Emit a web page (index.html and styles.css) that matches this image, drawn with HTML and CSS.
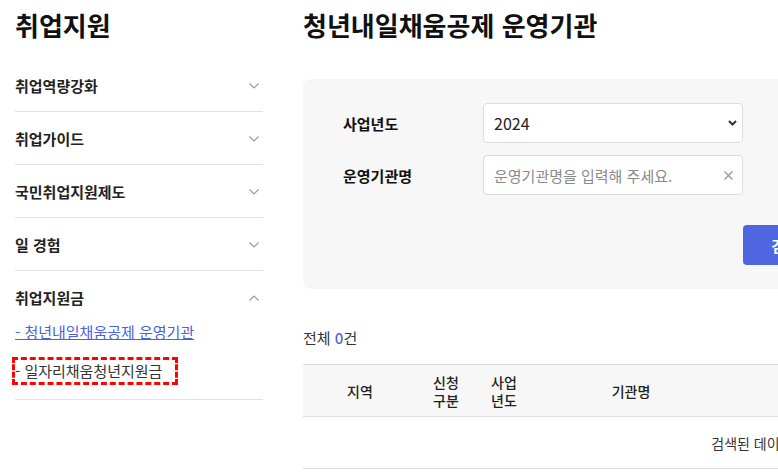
FILE: index.html
```html
<!DOCTYPE html>
<html lang="ko">
<head>
<meta charset="utf-8">
<title>청년내일채움공제 운영기관</title>
<link rel="stylesheet" href="styles.css">
</head>
<body>
<div class="page">
  <aside class="sidebar">
    <h2 class="side-title">취업지원</h2>
    <ul class="menu">
      <li class="menu-item">
        <div class="menu-head"><span>취업역량강화</span>
          <svg class="chev" width="10" height="6" viewBox="0 0 10 6"><path d="M0.5 0.5 L5 5 L9.5 0.5" fill="none" stroke="#9a9a9a" stroke-width="1.2"/></svg>
        </div>
      </li>
      <li class="menu-item">
        <div class="menu-head"><span>취업가이드</span>
          <svg class="chev" width="10" height="6" viewBox="0 0 10 6"><path d="M0.5 0.5 L5 5 L9.5 0.5" fill="none" stroke="#9a9a9a" stroke-width="1.2"/></svg>
        </div>
      </li>
      <li class="menu-item">
        <div class="menu-head"><span>국민취업지원제도</span>
          <svg class="chev" width="10" height="6" viewBox="0 0 10 6"><path d="M0.5 0.5 L5 5 L9.5 0.5" fill="none" stroke="#9a9a9a" stroke-width="1.2"/></svg>
        </div>
      </li>
      <li class="menu-item">
        <div class="menu-head"><span>일 경험</span>
          <svg class="chev" width="10" height="6" viewBox="0 0 10 6"><path d="M0.5 0.5 L5 5 L9.5 0.5" fill="none" stroke="#9a9a9a" stroke-width="1.2"/></svg>
        </div>
      </li>
      <li class="menu-item open">
        <div class="menu-head"><span>취업지원금</span>
          <svg class="chev" width="10" height="6" viewBox="0 0 10 6"><path d="M0.5 5.5 L5 1 L9.5 5.5" fill="none" stroke="#9a9a9a" stroke-width="1.2"/></svg>
        </div>
        <ul class="submenu">
          <li><a class="sub-link active" href="#">- 청년내일채움공제 운영기관</a></li>
          <li><a class="sub-link focused" href="#">- 일자리채움청년지원금</a></li>
        </ul>
      </li>
    </ul>
  </aside>
  <main class="main">
    <h1 class="page-title">청년내일채움공제 운영기관</h1>
    <section class="search-box">
      <div class="form-row">
        <label class="form-label">사업년도</label>
        <div class="field">
          <select class="select"><option>2024</option></select>
          <svg class="select-arrow" width="9" height="6" viewBox="0 0 9 6"><path d="M1 1 L4.5 4.5 L8 1" fill="none" stroke="#333" stroke-width="2"/></svg>
        </div>
      </div>
      <div class="form-row">
        <label class="form-label">운영기관명</label>
        <div class="field">
          <input class="input" type="text" placeholder="운영기관명을 입력해 주세요.">
          <svg class="clear-icon" width="9" height="9" viewBox="0 0 9 9"><path d="M0.5 0.5 L8.5 8.5 M8.5 0.5 L0.5 8.5" fill="none" stroke="#9a9a9a" stroke-width="1.4"/></svg>
        </div>
      </div>
      <div class="btn-row">
        <button class="btn-search">검색</button>
      </div>
    </section>
    <p class="total">전체 <strong>0</strong>건</p>
    <table class="list">
      <colgroup>
        <col class="c1"><col class="c2"><col class="c3"><col class="c4"><col>
      </colgroup>
      <thead>
        <tr>
          <th>지역</th>
          <th>신청<br>구분</th>
          <th>사업<br>년도</th>
          <th>기관명</th>
          <th>주소</th>
        </tr>
      </thead>
      <tbody>
        <tr><td colspan="5" class="empty">검색된 데이터가 없습니다.</td></tr>
      </tbody>
    </table>
  </main>
</div>
</body>
</html>
```

FILE: styles.css
```css
html, body {
  margin: 0;
  padding: 0;
  background: #fff;
  overflow: hidden;
}
body {
  font-family: "Noto Sans CJK KR", "Noto Sans", sans-serif;
  color: #222;
}
ul { list-style: none; margin: 0; padding: 0; }
.page {
  display: flex;
  gap: 40px;
  padding-left: 15px;
  width: 1400px;
}
.sidebar {
  flex: none;
  width: 248px;
}
.side-title, .page-title {
  margin: 8px 0 17px;
  font-size: 26px;
  line-height: 34px;
  font-weight: 700;
  color: #111;
}
.page-title { margin-bottom: 37px; }
.menu-item {
  border-bottom: 1px solid #e3e3e3;
}
.menu-head {
  display: flex;
  align-items: center;
  justify-content: space-between;
  padding: 16px 4px 15px 0;
  font-size: 15px;
  line-height: 21px;
  font-weight: 700;
  color: #222;
}
.menu-item.open .menu-head { padding-bottom: 0; }
.submenu {
  padding: 13px 0 17px;
}
.submenu li {
  display: flex;
  font-size: 15px;
  line-height: 22px;
}
.submenu li + li { margin-top: 17px; }
.sub-link {
  display: block;
  font-size: 15px;
  line-height: 22px;
  color: #333;
  text-decoration: none;
}
.sub-link.active {
  color: #4a62e0;
  text-decoration: underline;
}
.sub-link.focused {
  outline: 3px dashed #f00;
  padding-right: 13px;
}
.main {
  flex: none;
  width: 970px;
}
.search-box {
  background: #f7f7f7;
  border-radius: 8px;
  padding: 24px 40px;
}
.form-row {
  display: flex;
  align-items: center;
}
.form-row + .form-row { margin-top: 12px; }
.form-label {
  width: 140px;
  font-size: 15px;
  font-weight: 700;
  color: #111;
}
.field {
  position: relative;
  width: 260px;
}
.select, .input {
  display: block;
  box-sizing: border-box;
  width: 260px;
  height: 40px;
  border: 1px solid #dcdcdc;
  border-radius: 4px;
  background: #fff;
  padding: 0 10px;
  font-family: inherit;
  color: #222;
  outline: none;
}
.select {
  appearance: none;
  -webkit-appearance: none;
  font-size: 16px;
}
.input { font-size: 15px; }
.input::placeholder { color: #8a8a8a; }
.select-arrow {
  position: absolute;
  right: 6px;
  top: 17px;
  pointer-events: none;
}
.clear-icon {
  position: absolute;
  right: 10px;
  top: 16px;
}
.btn-row {
  margin-top: 30px;
  padding-left: 400px;
}
.btn-search {
  width: 84px;
  height: 40px;
  border: 0;
  border-radius: 4px;
  background: #5066e0;
  color: #fff;
  font-family: inherit;
  font-size: 15px;
  font-weight: 700;
}
.total {
  margin: 38px 0 15px;
  font-size: 15px;
  line-height: 22px;
  color: #333;
}
.total strong { color: #5066e0; font-weight: 500; }
.list {
  width: 970px;
  border-collapse: collapse;
  table-layout: fixed;
  border-top: 1px solid #dcdcdc;
}
.list col.c1 { width: 114px; }
.list col.c2 { width: 58px; }
.list col.c3 { width: 58px; }
.list col.c4 { width: 196px; }
.list th {
  height: 51px;
  padding: 0;
  background: #f7f7f7;
  border-bottom: 1px solid #dcdcdc;
  font-size: 14px;
  line-height: 18px;
  font-weight: 500;
  color: #222;
}
.list td {
  height: 51px;
  padding: 0;
  border-bottom: 1px solid #dcdcdc;
  text-align: center;
  font-size: 14px;
  color: #333;
}
```
